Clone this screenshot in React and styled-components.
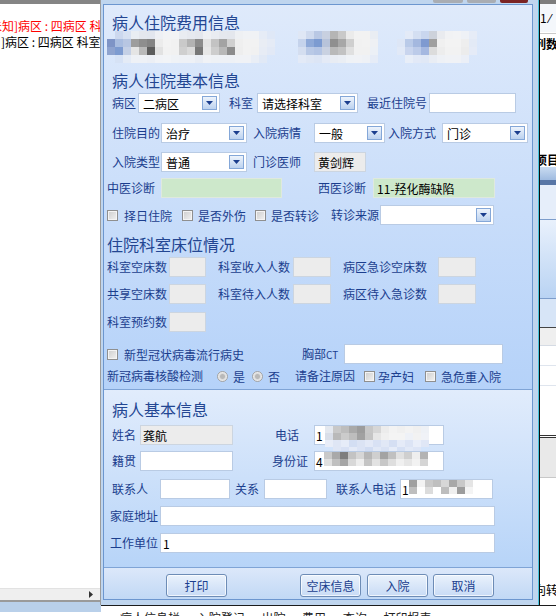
import React from 'react'
import styled, { createGlobalStyle } from 'styled-components'

const GlobalStyle = createGlobalStyle`
  html, body {
    margin: 0;
    padding: 0;
    background: #fff;
  }
  body {
    font-family: "Noto Sans CJK SC", "Liberation Sans", sans-serif;
    font-size: 12px;
    overflow: hidden;
  }
  * {
    box-sizing: border-box;
  }
`

const NAVY = '#1b3e8e'

const Screen = styled.div`
  width: 556px;
  height: 616px;
  display: flex;
  flex-direction: column;
  overflow: hidden;
`

const Main = styled.div`
  display: flex;
  height: 605px;
`

/* ---------- left pane (app behind the dialog) ---------- */

const LeftPane = styled.div`
  width: 101px;
  flex: none;
  border-right: 1px solid #9c9c9c;
  background: #fff;
  display: flex;
  flex-direction: column;
`

const TopBand = styled.div`
  height: 4px;
  flex: none;
  background: #858585;
`

const InfoLine = styled.div`
  margin-top: ${p => p.$mt || 0}px;
  line-height: 16px;
  white-space: nowrap;
  overflow: hidden;
  color: ${p => p.$color};
  text-indent: ${p => p.$indent || 0}px;
`

const Filler = styled.div`
  flex: 1;
`

const HScroll = styled.div`
  height: 12px;
  flex: none;
  background: #efefef;
  border-top: 1px solid #e2e2e2;
  display: flex;
  justify-content: flex-end;
  align-items: center;
  padding-right: 7px;
`

const LeftFoot = styled.div`
  height: 5px;
  flex: none;
  border-top: 2px solid #9a9a9a;
  background: #b9d0ea;
`

/* ---------- dialog ---------- */

const Dialog = styled.div`
  width: 439px;
  flex: none;
  display: flex;
  flex-direction: column;
  background: #bfd5ee;
  padding: 0 6px 0 2px;
  border-right: 1px solid #0e0e0e;
  box-shadow: inset -1px 0 0 #47c3dc;
`

const TitleEdge = styled.div`
  height: 4px;
  flex: none;
  display: flex;
  justify-content: flex-end;
  gap: 4px;
  padding-right: 5px;
`

const Stub = styled.div`
  width: ${p => p.$w}px;
  height: 3px;
  background: ${p => p.$c};
  border-radius: 0 0 2px 2px;
`

const Panel = styled.div`
  height: 596px;
  flex: none;
  border: 1px solid #6c96cf;
  display: flex;
  flex-direction: column;
  overflow: hidden;
`

const DialogFoot = styled.div`
  height: 5px;
  flex: none;
`

const Section = styled.div`
  flex: ${p => (p.$h ? 'none' : '1')};
  height: ${p => (p.$h ? `${p.$h}px` : 'auto')};
  display: flex;
  flex-direction: column;
  background: linear-gradient(${p => p.$from}, ${p => p.$to});
  border-bottom: ${p => (p.$divider ? '1px solid #7fa4d6' : 'none')};
`

const ButtonBar = styled.div`
  flex: 1;
  display: flex;
  align-items: flex-start;
  padding: 6px 0 0 62px;
  background: linear-gradient(#dce8fa, #c1d8f5);
`

const Title = styled.div`
  margin-top: ${p => p.$mt || 0}px;
  padding-left: ${p => p.$pl || 0}px;
  font-size: 16px;
  line-height: 20px;
  color: #234692;
  white-space: nowrap;
`

const Row = styled.div`
  display: flex;
  align-items: center;
  flex: none;
  height: ${p => p.$h || 20}px;
  margin-top: ${p => p.$mt || 0}px;
  padding-left: ${p => p.$pl || 0}px;
`

const Label = styled.span`
  flex: none;
  width: ${p => (p.$w ? `${p.$w}px` : 'auto')};
  margin-left: ${p => p.$ml || 0}px;
  color: ${NAVY};
  white-space: nowrap;
  line-height: 20px;
`

const Small = styled.span`
  font-size: 10px;
`

const tones = {
  white: { bg: '#fff', border: '#b9cbe4' },
  read: { bg: '#ececec', border: '#ccd5e0' },
  green: { bg: '#cde8cb', border: '#dfe9de' },
}

const Field = styled.div`
  flex: none;
  display: flex;
  align-items: center;
  width: ${p => p.$w}px;
  height: 20px;
  margin-left: ${p => p.$ml || 0}px;
  padding-left: ${p => (p.$pl === undefined ? 3 : p.$pl)}px;
  border: 1px solid ${p => tones[p.$tone || 'white'].border};
  background: ${p => tones[p.$tone || 'white'].bg};
  color: #000;
  white-space: nowrap;
`

const DropBtn = styled.span`
  margin-left: auto;
  margin-right: 2px;
  width: 15px;
  height: 14px;
  border: 1px solid #84a7d8;
  background: linear-gradient(#eef4fc, #bcd2ef);
  display: flex;
  align-items: center;
  justify-content: center;
`

const Box = styled.span`
  flex: none;
  width: 11px;
  height: 11px;
  border: 1px solid #8f8f8f;
  background: linear-gradient(135deg, #cdcdcd, #f2f2f2);
  box-shadow: inset 0 0 0 1px #f4f4f4;
`

const Round = styled.span`
  flex: none;
  width: 11px;
  height: 11px;
  border-radius: 50%;
  border: 1px solid #a3a3a3;
  background: radial-gradient(circle at 50% 50%, #b9b9b9 0 2px, #dcdcdc 3px, #f7f7f7 5px);
`

const Opt = styled.span`
  flex: none;
  display: flex;
  align-items: center;
  margin-left: ${p => p.$ml || 0}px;
  color: ${NAVY};
  white-space: nowrap;
`

const OptText = styled.span`
  margin-left: ${p => p.$gap || 6}px;
`

const BlurBox = styled.span`
  flex: none;
  display: block;
  line-height: 0;
  align-self: flex-start;
  margin-left: ${p => p.$ml || 0}px;
  margin-top: ${p => p.$mt || 0}px;
`

const Btn = styled.button`
  flex: none;
  width: 61px;
  height: 23px;
  margin-left: ${p => p.$ml || 0}px;
  padding: 0;
  font-family: inherit;
  font-size: 12px;
  line-height: 21px;
  color: ${NAVY};
  border: 1px solid #6d8cb6;
  border-radius: 3px;
  background: linear-gradient(#eaf2fc, #c8dbf5);
  box-shadow: inset 0 0 0 1px rgba(255, 255, 255, 0.7);
`

/* ---------- right pane (app behind the dialog) ---------- */

const RightPane = styled.div`
  flex: 1;
  display: flex;
  flex-direction: column;
  background: #fff;
  overflow: hidden;
`

const Band = styled.div`
  flex: none;
  height: ${p => p.$h}px;
  background: ${p => p.$bg || '#fff'};
  border-bottom: ${p => (p.$line ? `1px solid ${p.$line}` : 'none')};
`

const RText = styled.div`
  flex: none;
  height: ${p => p.$h}px;
  line-height: ${p => p.$h}px;
  white-space: nowrap;
  color: #000;
  font-weight: ${p => (p.$bold ? 700 : 400)};
  text-indent: ${p => p.$indent || 0}px;
  background: ${p => p.$bg || '#fff'};
`

const BottomStrip = styled.div`
  height: 11px;
  display: flex;
`

const StripLeft = styled.div`
  width: 101px;
  flex: none;
  background: linear-gradient(#b9d0ea 0 7px, #fff 7px);
`

const StripRight = styled.div`
  flex: 1;
  border-top: 1px solid #1c1c1c;
  padding: 4px 0 0 19px;
  line-height: 16px;
  white-space: nowrap;
  overflow: hidden;
  color: #222;
  word-spacing: 14px;
`

/* ---------- data ---------- */

const feeBlur1 = [
  [null, '#ccd8ee', '#d7e1f2', '#e9edf3', '#e4e7ee', '#e2e6ee', '#eef0f4', '#f2f3f5', '#f2f3f5', '#e9ecf1', '#e6e9ef', '#e4e7ed', '#eef0f3', '#e9ecf1', '#e5e8ee', '#e4e7ed', '#eef0f3', '#f0f2f5', '#f0f2f5', '#e6ecf6', '#dfe8f7'],
  ['#7e94c6', '#a9bde0', '#b7c6e2', '#9d9d9d', '#8e8e8e', '#848484', '#ececec', '#f3f3f3', '#f1f1f1', '#c9c9c9', '#b2b2b2', '#8b8b8b', '#e3e3e3', '#c3c3c3', '#a3a3a3', '#d0d0d0', '#efefef', '#f2f2f2', '#f2f2f2', '#e9edf4', '#e5ebf6'],
  ['#8ea3cf', '#7d9bd0', '#c4d0e6', '#e5e5e5', '#b9b9b9', '#5c5c5c', '#e2e2e2', '#f2f2f2', '#f1f1f1', '#cfcfcf', '#dadada', '#777777', '#e7e7e7', '#cdcdcd', '#b8b8b8', '#8c8c8c', '#eeeeee', '#f2f2f2', '#f1f1f1', '#e7ecf5', '#e2e9f6'],
  [null, '#d6e2f5', '#e4ebf6', '#eef1f6', '#eef1f6', '#eceff5', '#f1f3f7', '#f2f4f7', '#eff2f6', '#eef1f6', '#eef1f6', '#e9edf4', '#f0f2f6', '#eef1f5', '#eef1f6', '#eef1f6', '#f0f2f6', '#f0f2f6', '#e9eef6', '#e1e9f6', null],
]

const feeBlur2 = [
  ['#dfe7f5', '#cfdaee', '#b9c8e4', '#c8d0e0', '#b5b5b5', '#c9c9c9', '#ebebeb', '#f2f2f2', '#f2f2f2', '#e9edf3'],
  ['#c5d3ec', '#8ea9d8', '#7c9bd1', '#b7c3da', '#8f8f8f', '#a7a7a7', '#cfcfcf', '#f1f1f1', '#f2f2f2', '#eef0f4'],
  ['#d4def0', '#b9c9e6', '#b3c4e4', '#c9d1e1', '#b9b9b9', '#c2c2c2', '#e0e0e0', '#f1f1f1', '#f1f1f1', '#ecf0f6'],
  ['#e3eaf7', '#dfe7f5', '#dce5f5', '#e4eaf6', '#e8ecf3', '#eaeef4', '#eff2f6', '#f0f2f6', '#eef1f6', '#e6ecf7'],
]

const feeBlur3 = [
  [null, '#e3eaf7', '#d4dff2', '#c9d6ee', '#cdd2db', '#e9ebef', '#f1f2f4', '#f2f3f5', '#eef1f6', '#e6ecf7'],
  ['#dde6f6', '#b9cae8', '#a4b8df', '#7f9ad0', '#9f9f9f', '#f0f0f0', '#f3f3f3', '#f3f3f3', '#eeeeee', '#e3eaf6'],
  ['#e1e9f7', '#c9d5ee', '#bccbe9', '#a5b8e0', '#dcdcdc', '#ededed', '#f2f2f2', '#f2f2f2', '#ececec', '#e5ebf7'],
  [null, '#e8eef8', '#e2e9f7', '#e0e8f6', '#e9edf4', '#eef1f6', '#f0f2f6', '#f0f2f6', '#ebeff7', null],
]

const phoneBlur = [
  ['#e4e8ef', '#c8c8c8', '#bdbdbd', '#a9a9a9', '#9c9c9c', '#c7c7c7', '#d6d6d6', '#ececec', '#f3f3f3', '#f0f0f0', '#f3f3f3', '#f0f0f0', '#eef1f6'],
  ['#d9dee8', '#b9b9b9', '#cbcbcb', '#bdbdbd', '#a1a1a1', '#c5c5c5', '#e6e6e6', '#f0f0f0', '#f4f4f4', '#f4f4f4', '#eef1f7', '#f2f2f2', '#f0f2f7'],
  ['#e8edf8', '#dfe6f5', '#e6ecf8', '#d3def3', '#dbe3f4', '#e3e9f7', '#d8e1f4', '#e1e8f6', '#d5dff3', '#e5ebf8', '#dce4f5', '#e9eef9', '#e0e7f6'],
  [null, '#dfe6f5', '#d8e1f4', '#e4eaf7', '#dbe3f5', '#d1dcf2', '#e1e8f6', '#d9e2f4', '#e6ecf8', '#d6e0f4', '#e2e9f7', '#dde5f6', null],
]

const idBlur = [
  ['#c9c9c9', '#a9a9a9', '#7e7e7e', '#c3c3c3', '#d6d6d6', '#b7b7b7', '#cfcfcf', '#a3a3a3', '#c0c0c0', '#e1e1e1', '#cfcfcf', '#eeeeee', '#b3b3b3'],
  ['#e0e0e0', '#c0c0c0', '#a5a5a5', '#d8d8d8', '#ededed', '#c4c4c4', '#e2e2e2', '#c7c7c7', '#dedede', '#f0f0f0', '#e6e6e6', '#f2f2f2', '#d5d5d5'],
]

const contactBlur = [
  ['#a0a0a0', '#f3f3f3', '#c9c9c9', '#bfbfbf', '#d7d7d7', '#a8a8a8', '#c8c8c8', '#e5e5e5'],
  ['#bebebe', '#ffffff', '#dcdcdc', '#ffffff', '#bdbdbd', '#efefef', '#9c9c9c', '#f4f4f4'],
]

/* ---------- small parts ---------- */

function Blur({ cells, cw = 8, ch = 8, ml, mt }) {
  const cols = cells[0].length
  return (
    <BlurBox $ml={ml} $mt={mt}>
      <svg width={cols * cw} height={cells.length * ch}>
        {cells.map((row, r) =>
          row.map((c, i) =>
            c ? <rect key={r + '-' + i} x={i * cw} y={r * ch} width={cw} height={ch} fill={c} /> : null
          )
        )}
      </svg>
    </BlurBox>
  )
}

function Select({ w, ml, value }) {
  return (
    <Field $w={w} $ml={ml} $pl={4}>
      <span>{value}</span>
      <DropBtn>
        <svg width="7" height="4" viewBox="0 0 7 4">
          <path d="M0 0h7L3.5 4z" fill="#1b3e8e" />
        </svg>
      </DropBtn>
    </Field>
  )
}

function Check({ ml, gap, children }) {
  return (
    <Opt $ml={ml}>
      <Box />
      <OptText $gap={gap}>{children}</OptText>
    </Opt>
  )
}

function Radio({ ml, gap, children }) {
  return (
    <Opt $ml={ml}>
      <Round />
      <OptText $gap={gap}>{children}</OptText>
    </Opt>
  )
}

export default function App() {
  return (
    <Screen>
      <GlobalStyle />
      <Main>
        <LeftPane>
          <TopBand />
          <InfoLine $mt={14} $color="#ff0000" $indent={-14}>[未知]病区 : 四病区 科室:内科</InfoLine>
          <InfoLine $color="#000" $indent={1}>]病区 : 四病区 科室:内科</InfoLine>
          <Filler />
          <HScroll>
            <svg width="4" height="7" viewBox="0 0 4 7">
              <path d="M0 0L4 3.5L0 7z" fill="#333" />
            </svg>
          </HScroll>
          <LeftFoot />
        </LeftPane>

        <Dialog>
          <TitleEdge>
            <Stub $w={30} $c="#a9adb3" />
            <Stub $w={29} $c="#a9adb3" />
            <Stub $w={28} $c="#7b2323" />
          </TitleEdge>
          <Panel>
            <Section $h={385} $from="#dfeafb" $to="#b5d2f9" $divider>
              <Title $mt={7} $pl={8}>病人住院费用信息</Title>
              <Row $h={32} $mt={-1} $pl={3}>
                <Blur cells={feeBlur1} />
                <Blur cells={feeBlur2} ml={23} />
                <Blur cells={feeBlur3} ml={19} />
              </Row>
              <Title $mt={7} $pl={8}>病人住院基本信息</Title>
              <Row $mt={3} $pl={8}>
                <Label $w={24}>病区</Label>
                <Select w={82} ml={2} value="二病区" />
                <Label $w={24} $ml={9}>科室</Label>
                <Select w={101} ml={4} value="请选择科室" />
                <Label $w={60} $ml={9}>最近住院号</Label>
                <Field $w={87} $ml={2} />
              </Row>
              <Row $mt={10} $pl={8}>
                <Label $w={48}>住院目的</Label>
                <Select w={86} ml={1} value="治疗" />
                <Label $w={48} $ml={6}>入院病情</Label>
                <Select w={71} ml={13} value="一般" />
                <Label $w={48} $ml={3}>入院方式</Label>
                <Select w={86} ml={6} value="门诊" />
              </Row>
              <Row $mt={9} $pl={8}>
                <Label $w={48}>入院类型</Label>
                <Select w={86} ml={1} value="普通" />
                <Label $w={48} $ml={6}>门诊医师</Label>
                <Field $w={52} $ml={13} $tone="read">黄剑辉</Field>
              </Row>
              <Row $mt={6} $pl={3}>
                <Label $w={48}>中医诊断</Label>
                <Field $w={121} $ml={6} $tone="green" />
                <Label $w={48} $ml={36}>西医诊断</Label>
                <Field $w={122} $ml={7} $tone="green">11-羟化酶缺陷</Field>
              </Row>
              <Row $mt={7} $pl={3}>
                <Check>择日住院</Check>
                <Check ml={10} gap={5}>是否外伤</Check>
                <Check ml={9} gap={5}>是否转诊</Check>
                <Label $w={48} $ml={12}>转诊来源</Label>
                <Select w={114} ml={1} value="" />
              </Row>
              <Title $mt={9} $pl={3}>住院科室床位情况</Title>
              <Row $mt={3} $pl={3}>
                <Label $w={60}>科室空床数</Label>
                <Field $w={37} $ml={2} $tone="read" />
                <Label $w={72} $ml={12}>科室收入人数</Label>
                <Field $w={38} $ml={3} $tone="read" />
                <Label $w={84} $ml={12}>病区急诊空床数</Label>
                <Field $w={38} $ml={11} $tone="read" />
              </Row>
              <Row $mt={7} $pl={3}>
                <Label $w={60}>共享空床数</Label>
                <Field $w={37} $ml={2} $tone="read" />
                <Label $w={72} $ml={12}>科室待入人数</Label>
                <Field $w={38} $ml={3} $tone="read" />
                <Label $w={84} $ml={12}>病区待入急诊数</Label>
                <Field $w={38} $ml={11} $tone="read" />
              </Row>
              <Row $mt={8} $pl={3}>
                <Label $w={60}>科室预约数</Label>
                <Field $w={37} $ml={2} $tone="read" />
              </Row>
              <Row $mt={12} $pl={3}>
                <Check>新型冠状病毒流行病史</Check>
                <Label $w={42} $ml={58}>胸部<Small>CT</Small></Label>
                <Field $w={159} />
              </Row>
              <Row $mt={2} $pl={3}>
                <Label $w={96}>新冠病毒核酸检测</Label>
                <Radio ml={14} gap={5}>是</Radio>
                <Radio ml={7} gap={5}>否</Radio>
                <Label $w={60} $ml={15}>请备注原因</Label>
                <Check ml={9} gap={3}>孕产妇</Check>
                <Check ml={11} gap={5}>急危重入院</Check>
              </Row>
            </Section>

            <Section $h={178} $from="#e1ecfc" $to="#b7d4f8" $divider>
              <Title $mt={9} $pl={8}>病人基本信息</Title>
              <Row $mt={6} $pl={8}>
                <Label $w={24}>姓名</Label>
                <Field $w={93} $ml={4} $tone="read" $pl={2}>龚航</Field>
                <Label $w={24} $ml={42}>电话</Label>
                <Field $w={130} $ml={15} $pl={1}>
                  <span>1</span>
                  <Blur cells={phoneBlur} ch={7} ml={2} />
                </Field>
              </Row>
              <Row $mt={6} $pl={8}>
                <Label $w={24}>籍贯</Label>
                <Field $w={93} $ml={4} />
                <Label $w={36} $ml={39}>身份证</Label>
                <Field $w={130} $ml={6} $pl={1}>
                  <span>4</span>
                  <Blur cells={idBlur} ch={7} ml={1} />
                </Field>
              </Row>
              <Row $mt={8} $pl={8}>
                <Label $w={36}>联系人</Label>
                <Field $w={70} $ml={12} />
                <Label $w={24} $ml={5}>关系</Label>
                <Field $w={63} $ml={5} />
                <Label $w={60} $ml={9}>联系人电话</Label>
                <Field $w={93} $ml={4} $pl={1}>
                  <span>1</span>
                  <Blur cells={contactBlur} ch={7} ml={0} />
                </Field>
              </Row>
              <Row $mt={7} $pl={6}>
                <Label $w={48}>家庭地址</Label>
                <Field $w={335} $ml={2} />
              </Row>
              <Row $mt={7} $pl={6}>
                <Label $w={48}>工作单位</Label>
                <Field $w={335} $ml={2} $pl={2}>1</Field>
              </Row>
            </Section>

            <ButtonBar>
              <Btn>打印</Btn>
              <Btn $ml={73}>空床信息</Btn>
              <Btn $ml={6}>入院</Btn>
              <Btn $ml={5}>取消</Btn>
            </ButtonBar>
          </Panel>
          <DialogFoot />
        </Dialog>

        <RightPane>
          <Band $h={4} $bg="#7d7d7d" />
          <RText $h={28} $bg="#f4f7fb">1 ⁄</RText>
          <Band $h={2} $bg="#fff" $line="#c9c9c9" />
          <RText $h={20} $bold $indent={-6}>列数</RText>
          <Band $h={99} />
          <RText $h={14} $bold $indent={-5}>项目</RText>
          <Band $h={13} $bg="linear-gradient(#c9dbf1, #9fbbe0)" />
          <Band $h={5} $bg="#5876a6" />
          <Band $h={35} $bg="#e6eefa" $line="#7d9dcb" />
          <Band $h={79} $bg="linear-gradient(#e9f1fc, #b9d3f3)" $line="#7d9dcb" />
          <Band $h={29} $bg="#d7e5f7" $line="#444" />
          <Band $h={18} $bg="#efefef" $line="#d5dbe4" />
          <Band $h={20} $line="#dfe5ee" />
          <Band $h={20} $line="#dfe5ee" />
          <Band $h={50} $line="#333" />
          <Band $h={2} $line="#333" />
          <Band $h={40} $bg="#e9e9e9" $line="#c8c8c8" />
          <Band $h={104} />
          <RText $h={16} $indent={-6}>向转</RText>
          <Band $h={10} />
        </RightPane>
      </Main>
      <BottomStrip>
        <StripLeft />
        <StripRight>病人信息栏 入院登记 出院 费用 查询 打印报表</StripRight>
      </BottomStrip>
    </Screen>
  )
}
